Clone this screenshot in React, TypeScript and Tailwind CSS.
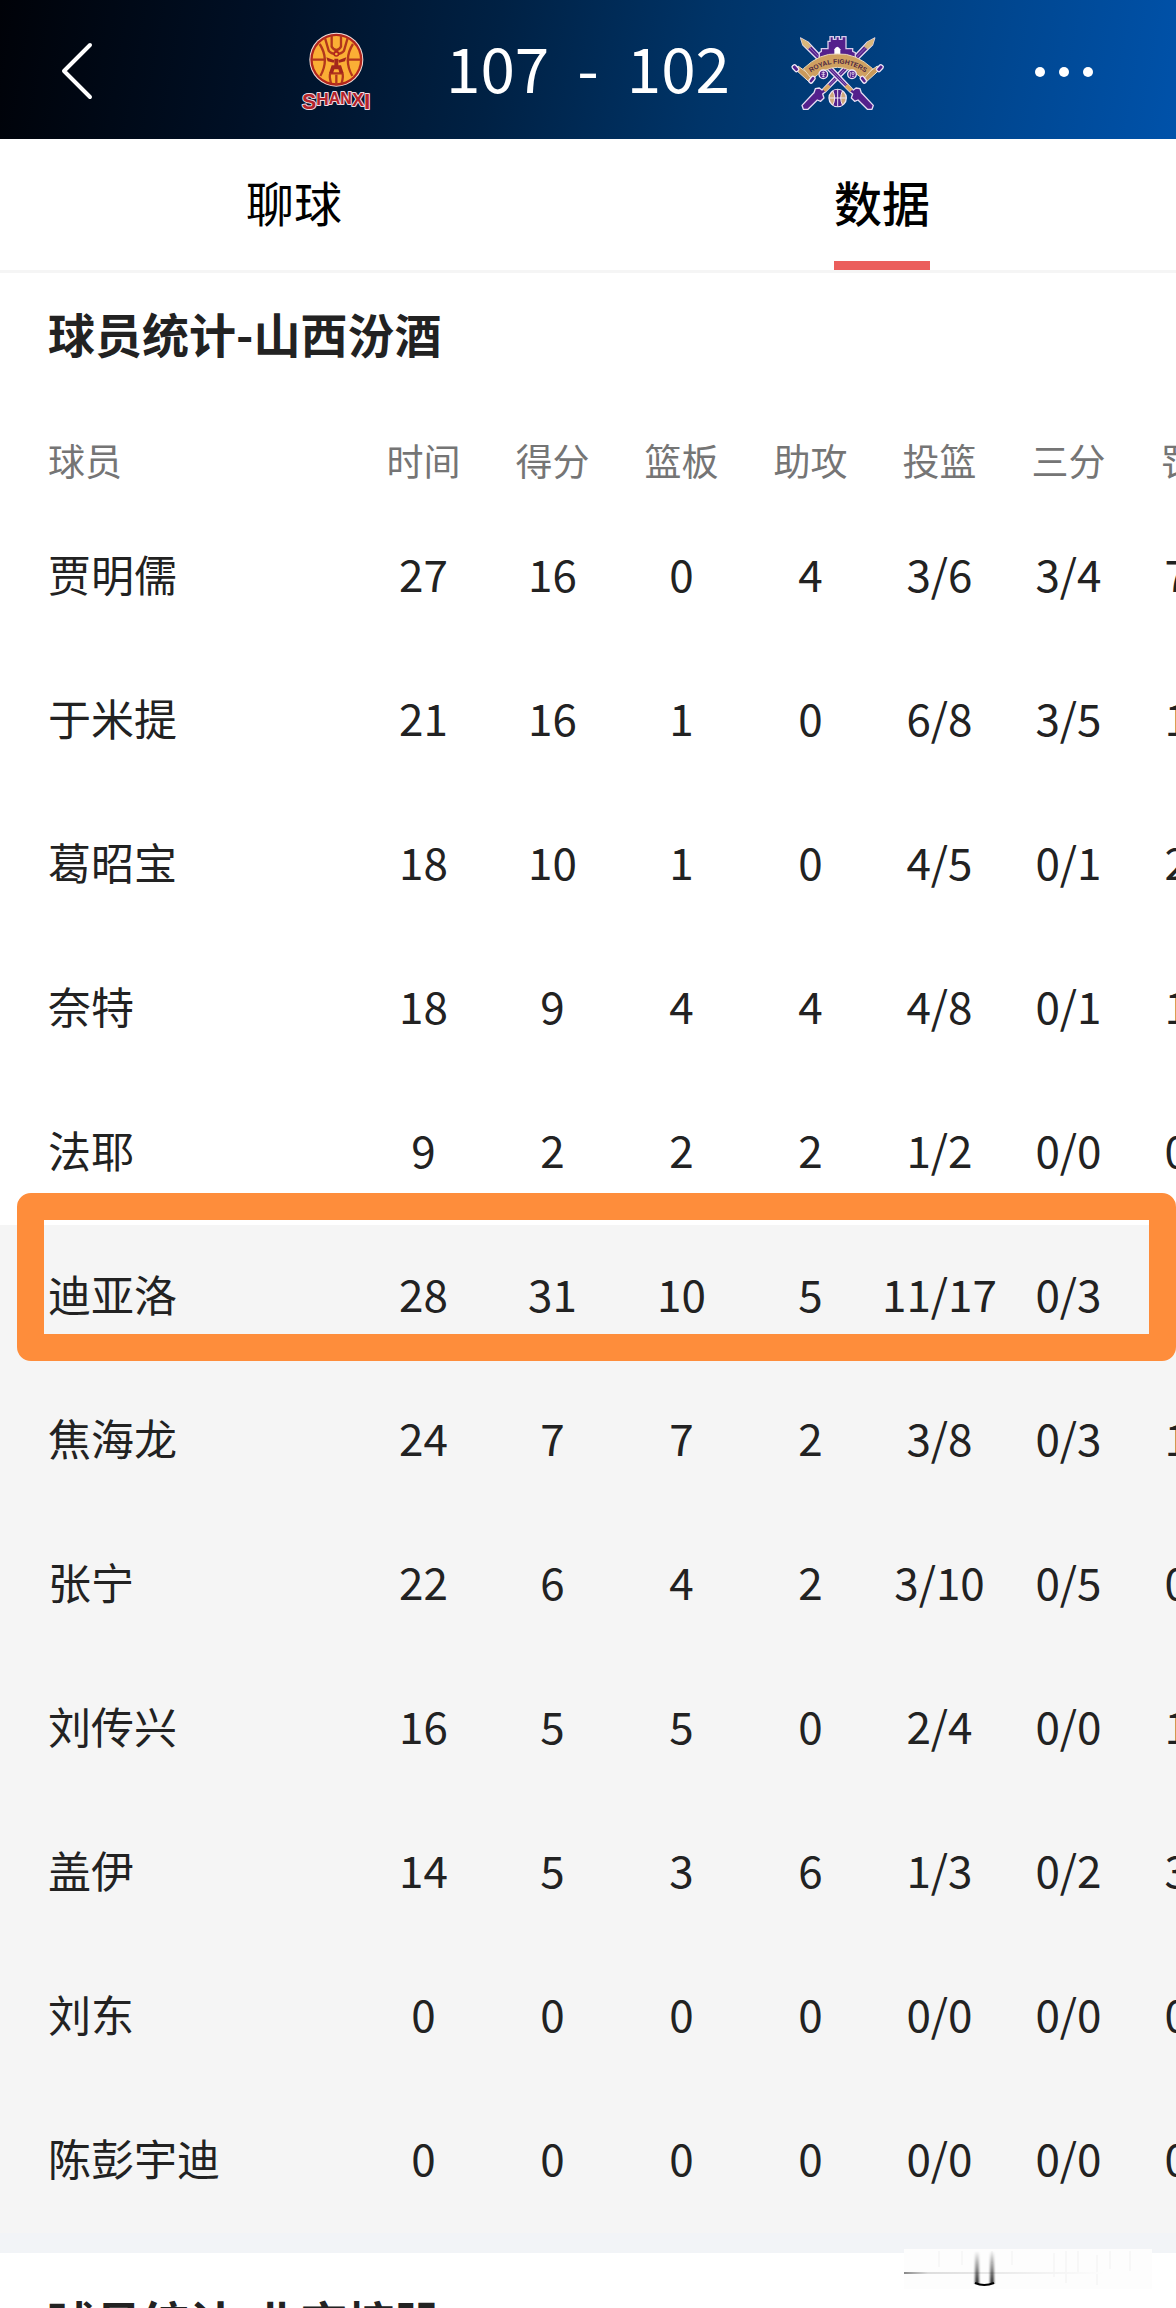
import React from "react";

type Player = { name: string; stats: string[] };

const columns = ["时间", "得分", "篮板", "助攻", "投篮", "三分", "罚球"];

const starters: Player[] = [
  { name: "贾明儒", stats: ["27", "16", "0", "4", "3/6", "3/4", "7/8"] },
  { name: "于米提", stats: ["21", "16", "1", "0", "6/8", "3/5", "1/2"] },
  { name: "葛昭宝", stats: ["18", "10", "1", "0", "4/5", "0/1", "2/2"] },
  { name: "奈特", stats: ["18", "9", "4", "4", "4/8", "0/1", "1/2"] },
  { name: "法耶", stats: ["9", "2", "2", "2", "1/2", "0/0", "0/0"] },
];

const bench: Player[] = [
  { name: "迪亚洛", stats: ["28", "31", "10", "5", "11/17", "0/3", "9/9"] },
  { name: "焦海龙", stats: ["24", "7", "7", "2", "3/8", "0/3", "1/2"] },
  { name: "张宁", stats: ["22", "6", "4", "2", "3/10", "0/5", "0/0"] },
  { name: "刘传兴", stats: ["16", "5", "5", "0", "2/4", "0/0", "1/2"] },
  { name: "盖伊", stats: ["14", "5", "3", "6", "1/3", "0/2", "3/4"] },
  { name: "刘东", stats: ["0", "0", "0", "0", "0/0", "0/0", "0/0"] },
  { name: "陈彭宇迪", stats: ["0", "0", "0", "0", "0/0", "0/0", "0/0"] },
];

function ShanxiLogo() {
  return (
    <svg viewBox="0 0 285 300" className="h-[100px] w-[95px] shrink-0" role="img" aria-label="Shanxi">
      <circle cx="136" cy="119" r="81" fill="#f3dcd6" />
      <circle cx="136" cy="119" r="78" fill="#b3261c" />
      <circle cx="136" cy="119" r="71" fill="#fbaf35" />
      <g fill="none" stroke="#b3361c" strokeWidth="7">
        <path d="M62 119H104M168 119H210" />
        <path d="M86 72Q116 118 88 168M186 72Q156 118 184 168" />
        <path d="M102 54L113 92Q120 101 136 103Q152 101 159 92L170 54" />
        <path d="M122 46V80Q128 90 136 90Q144 90 150 80V46" />
        <path d="M120 190Q114 166 118 160H154Q158 166 152 190" />
        <path d="M136 164V196" />
      </g>
      <path d="M106 112L130 121L128 128L110 124ZM166 112L142 121L144 128L162 124Z" fill="#a3261c" />
      <path d="M130 116H142V136H150L158 160H146L142 148H130L126 160H114L122 136H130Z" fill="#a3261c" />
      <circle cx="136" cy="101" r="9" fill="#b3261c" />
      <circle cx="136" cy="102" r="4" fill="#fbaf35" />
      <text
        x="33"
        y="266"
        fill="#b5232a"
        stroke="#eddde4"
        strokeWidth="6"
        paintOrder="stroke"
        strokeLinejoin="round"
        fontFamily="Liberation Sans, sans-serif"
        fontWeight="700"
      >
        <tspan fontSize="64">S</tspan>
        <tspan fontSize="52" dy="-10">H</tspan>
        <tspan fontSize="48" dy="-3">A</tspan>
        <tspan fontSize="48">N</tspan>
        <tspan fontSize="54" dy="4">X</tspan>
        <tspan fontSize="68" dy="11">I</tspan>
      </text>
    </svg>
  );
}

function Sword() {
  return (
    <g>
      <path
        d="M50 54L72 66L208 210L216 204L228 206L232 218L236 222L268 256L264 268L250 268L222 240L212 244L202 234L206 222L198 216L56 74Z"
        fill="#54208c"
        stroke="#e6dcf3"
        strokeWidth="4"
        strokeLinejoin="round"
      />
      <path d="M50 54L72 66L82 80L72 88L56 74Z" fill="#d9b77c" />
      <path d="M74 80L196 206" stroke="#a98fd0" strokeWidth="2" fill="none" />
      <path d="M190 192L206 208L198 216L182 200Z" fill="#d9a662" />
    </g>
  );
}

function RoyalFightersLogo() {
  return (
    <svg viewBox="0 0 315 300" className="h-[100px] w-[105px] shrink-0" role="img" aria-label="Royal Fighters">
      <g transform="translate(322 0) scale(-1 1)">
        <Sword />
      </g>
      <Sword />
      <path
        d="M106 116V98L112 94V86H132V64H138V50H148V58H156V50H166V58H174V50H186V86H206V94L214 98V116Z"
        fill="#54208c"
        stroke="#d9cdea"
        strokeWidth="4"
      />
      <path d="M151 110V88Q160 72 169 88V110Z" fill="#fff" />
      <path
        d="M42 138L92 174L80 190L34 148ZM280 138L230 174L242 190L288 148Z"
        fill="#c99a5b"
        stroke="#efe3d2"
        strokeWidth="3"
      />
      <path
        d="M58 146Q108 98 160 102Q214 98 266 146L238 178Q198 142 160 142Q122 142 84 178Z"
        fill="#cfa060"
        stroke="#ecd9b8"
        strokeWidth="3"
      />
      <g fill="#54208c" stroke="#efe7f6" strokeWidth="4">
        <rect x="28" y="134" width="13" height="22" rx="5" transform="rotate(-42 34 145)" />
        <rect x="281" y="134" width="13" height="22" rx="5" transform="rotate(42 288 145)" />
        <rect x="78" y="168" width="12" height="22" rx="5" transform="rotate(38 84 179)" />
        <rect x="232" y="168" width="12" height="22" rx="5" transform="rotate(-38 238 179)" />
        <circle cx="118" cy="163" r="13" />
        <circle cx="204" cy="163" r="13" />
      </g>
      <g fill="none" stroke="#fff" strokeWidth="2">
        <path d="M113 157H123M118 154V172M112 163H124M114 169H122" />
        <path d="M199 156V170M204 157H210V163H204ZM204 169H211" />
      </g>
      <path id="ribbon-arc" d="M80 158Q161 104 244 158" fill="none" />
      <text
        fill="#4c2440"
        fontSize="20"
        fontWeight="700"
        textAnchor="middle"
        fontFamily="Liberation Sans, sans-serif"
      >
        <textPath href="#ribbon-arc" startOffset="50%">ROYAL FIGHTERS</textPath>
      </text>
      <circle cx="161" cy="234" r="26" fill="#cfa77a" stroke="#efe7f6" strokeWidth="4" />
      <path d="M148 212Q160 206 174 212Q166 234 174 256Q160 262 148 256Q156 234 148 212Z" fill="#54208c" />
      <path
        d="M161 208V260M136 234H186M146 212Q158 234 146 256M176 212Q164 234 176 256"
        stroke="#efe7f6"
        strokeWidth="3"
        fill="none"
      />
    </svg>
  );
}

function TopBar() {
  return (
    <header className="grid h-[139px] shrink-0 grid-cols-[1fr_auto_1fr] items-center bg-[linear-gradient(100deg,#000208_0%,#001026_22%,#002144_42%,#003468_60%,#004286_78%,#0052aa_100%)] text-white">
      <button type="button" aria-label="返回" className="ml-14 w-10 justify-self-start">
        <svg viewBox="0 0 40 60" className="h-[60px] w-10" fill="none" stroke="currentColor" strokeWidth="4" strokeLinecap="round" strokeLinejoin="round">
          <path d="M34 5L8 31L34 57" />
        </svg>
      </button>
      <div className="flex items-center pl-1">
        <ShanxiLogo />
        <div className="flex gap-7 pr-[54px] pb-2 pl-[60px] text-[62px] leading-none">
          <span>107</span>
          <span>-</span>
          <span>102</span>
        </div>
        <RoyalFightersLogo />
      </div>
      <button type="button" aria-label="更多" className="mt-1 mr-20 flex justify-self-end gap-[14px] p-[3px]">
        <span className="size-[10px] rounded-full bg-white" />
        <span className="size-[10px] rounded-full bg-white" />
        <span className="size-[10px] rounded-full bg-white" />
      </button>
    </header>
  );
}

function Tabs() {
  return (
    <nav className="grid h-[134px] shrink-0 grid-cols-2 border-b-[3px] border-[#f5f5f5] text-5xl text-black">
      <a href="#chat" className="flex items-center justify-center pb-2 font-normal">聊球</a>
      <a href="#data" aria-current="page" className="relative flex items-center justify-center pb-2 font-medium">
        数据
        <span className="absolute bottom-0 h-[9px] w-24 bg-[#eb5e5c]" />
      </a>
    </nav>
  );
}

function PlayerRow({ player, marked = false }: { player: Player; marked?: boolean }) {
  return (
    <tr className="relative h-36">
      <th scope="row" className="pb-2 pl-12 text-left text-[43px] font-normal">
        {player.name}
        {marked && (
          <span className="pointer-events-none absolute -top-8 left-[17px] z-10 h-[168px] w-[calc(100vw-17px)] rounded-[14px] border-[27px] border-[#fe8d3b]" />
        )}
      </th>
      {player.stats.map((value, i) => (
        <td key={i} className="pb-2 text-center whitespace-nowrap">{value}</td>
      ))}
    </tr>
  );
}

function Smudge() {
  return (
    <svg viewBox="0 0 248 44" className="absolute right-6 -top-1 h-11 w-[248px]" aria-hidden="true">
      <defs>
        <linearGradient id="smudge-fade" x1="0" y1="0" x2="0" y2="1">
          <stop offset="0" stopColor="#000" stopOpacity="0" />
          <stop offset="1" stopColor="#000" stopOpacity="0.85" />
        </linearGradient>
        <linearGradient id="smudge-line" x1="0" y1="0" x2="1" y2="0">
          <stop offset="0" stopColor="#888" />
          <stop offset="0.12" stopColor="#ddd" />
          <stop offset="1" stopColor="#fdfdfd" />
        </linearGradient>
        <filter id="smudge-soft" x="-50%" y="-10%" width="200%" height="120%">
          <feGaussianBlur stdDeviation="1 0" />
        </filter>
      </defs>
      <rect width="248" height="40" fill="#fdfdfd" />
      <path d="M35 2V18M58 2V16M88 2V14M108 2V16M150 4V28M162 2V34M174 2V24M193 6V36M206 2V20M226 2V22" stroke="#f7f7f7" strokeWidth="2" />
      <rect y="23" width="200" height="2" fill="url(#smudge-line)" />
      <g filter="url(#smudge-soft)" fill="url(#smudge-fade)">
        <rect x="71" y="2" width="4" height="33" />
        <rect x="86" y="2" width="4" height="33" />
      </g>
      <path d="M71 34Q80 38 90 34" fill="none" stroke="#000" strokeWidth="2" />
    </svg>
  );
}

export default function App() {
  return (
    <div className="flex h-screen flex-col overflow-hidden bg-white font-['Noto_Sans_CJK_SC',sans-serif] text-[#222222]">
      <TopBar />
      <Tabs />
      <main className="min-h-0 flex-1 overflow-hidden">
        <section className="overflow-hidden">
          <h2 className="px-12 pt-8 pb-[60px] text-[47px] leading-[56px] font-bold">球员统计-山西汾酒</h2>
          <table className="w-[1262px] table-fixed text-[44px] leading-[64px]">
            <colgroup>
              <col className="w-[359px]" />
              {columns.map((c) => (
                <col key={c} className="w-[129px]" />
              ))}
            </colgroup>
            <thead className="text-[37px] text-[#757575]">
              <tr className="h-[84px]">
                <th scope="col" className="pb-1.5 pl-12 text-left font-normal">球员</th>
                {columns.map((c) => (
                  <th key={c} scope="col" className="pb-1.5 text-center font-normal">{c}</th>
                ))}
              </tr>
            </thead>
            <tbody>
              {starters.map((p) => (
                <PlayerRow key={p.name} player={p} />
              ))}
            </tbody>
            <tbody className="bg-[#f5f5f5]">
              {bench.map((p, i) => (
                <PlayerRow key={p.name} player={p} marked={i === 0} />
              ))}
            </tbody>
          </table>
          <div className="h-5 bg-[#f2f4f7]" />
        </section>
        <section className="relative">
          <Smudge />
          <h2 className="px-12 pt-10 text-[47px] leading-[56px] font-bold">球员统计-北京控股</h2>
        </section>
      </main>
    </div>
  );
}
